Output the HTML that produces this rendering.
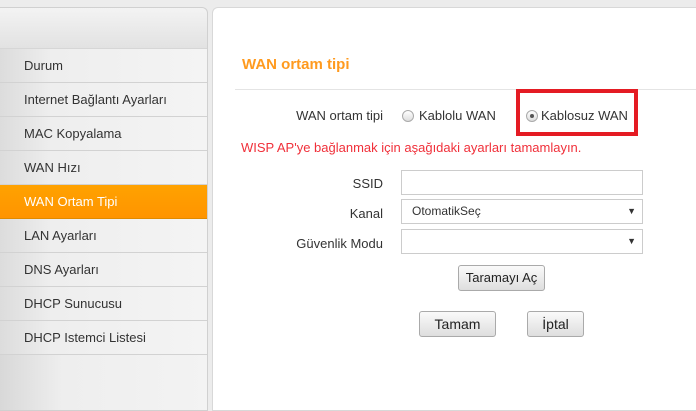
<!DOCTYPE html>
<html><head><meta charset="utf-8"><style>
*{margin:0;padding:0;box-sizing:border-box}
body{width:696px;height:411px;overflow:hidden;background:#ececec;font-family:"Liberation Sans","DejaVu Sans",sans-serif;position:relative}
#side{position:absolute;left:0;top:7px;width:208px;height:404px;background:linear-gradient(90deg,#d8d8d8,#eeeeee 30%,#f3f3f3);border:1px solid #d0d0d0;border-left:none;border-radius:0 6px 0 0}
#side .hd{height:41px;background:linear-gradient(180deg,#f3f3f3,#e2e2e2);border-bottom:1px solid #d6d6d6;border-radius:0 6px 0 0}
.it{height:34px;line-height:33px;padding-left:24px;font-size:13px;color:#333;border-bottom:1px solid #d2d2d2;background:linear-gradient(90deg,#dcdcdc,#eeeeee 25%,#f4f4f4)}
.it.on{background:linear-gradient(180deg,#ffa200,#ff9400);color:#fff;border-bottom-color:#e08a00}
#main{position:absolute;left:212px;top:7px;width:484px;height:404px;background:#fff;border:1px solid #d8d8d8;border-right:none;border-radius:6px 0 0 0}
.abs{position:absolute;font-size:13px;color:#333}
.lbl{position:absolute;right:313px;font-size:13px;color:#333;text-align:right;white-space:nowrap}
h1{position:absolute;left:29px;top:48px;font-size:15px;color:#ff9a1e;font-weight:bold}
.line{position:absolute;left:22px;top:81px;width:462px;height:1px;background:#e4e4e4}
.radio{position:absolute;width:12px;height:12px;border-radius:50%;border:1px solid #aaa;background:linear-gradient(#fff,#ddd)}
.inp{position:absolute;left:188px;width:242px;height:25px;border:1px solid #ccc;background:#fff;font-size:12px;line-height:23px;padding-left:10px;color:#333}
.arr{position:absolute;right:6px;top:0;font-size:9px}
.btn{position:absolute;border:1px solid #aaa;border-radius:3px;background:linear-gradient(#fafafa,#dedede);font-size:14px;text-align:center;color:#222}
</style></head><body>
<div id="side"><div class="hd"></div>
<div class="it">Durum</div>
<div class="it">Internet Bağlantı Ayarları</div>
<div class="it">MAC Kopyalama</div>
<div class="it">WAN Hızı</div>
<div class="it on">WAN Ortam Tipi</div>
<div class="it">LAN Ayarları</div>
<div class="it">DNS Ayarları</div>
<div class="it">DHCP Sunucusu</div>
<div class="it">DHCP Istemci Listesi</div>
</div>
<div id="main">
<div class="line"></div>
<h1>WAN ortam tipi</h1>
<div class="lbl" style="top:100px">WAN ortam tipi</div>
<div class="radio" style="left:189px;top:102px"></div>
<div class="abs" style="left:206px;top:100px">Kablolu WAN</div>
<div style="position:absolute;left:303px;top:81px;width:122px;height:47px;border:4px solid #e41b23"></div>
<div class="radio" style="left:313px;top:102px"></div>
<div style="position:absolute;left:317px;top:106px;width:4px;height:4px;border-radius:50%;background:#555"></div>
<div class="abs" style="left:328px;top:100px">Kablosuz WAN</div>
<div class="abs" style="left:28px;top:132px;color:#f0303a;font-size:13px">WISP AP'ye bağlanmak için aşağıdaki ayarları tamamlayın.</div>
<div class="lbl" style="top:168px">SSID</div>
<div class="inp" style="top:162px"></div>
<div class="lbl" style="top:198px">Kanal</div>
<div class="inp" style="top:191px">OtomatikSeç<span class="arr">▼</span></div>
<div class="lbl" style="top:228px">Güvenlik Modu</div>
<div class="inp" style="top:221px"><span class="arr">▼</span></div>
<div class="btn" style="left:245px;top:257px;width:87px;height:26px;line-height:24px;font-size:13px">Taramayı Aç</div>
<div class="btn" style="left:206px;top:303px;width:77px;height:26px;line-height:24px">Tamam</div>
<div class="btn" style="left:314px;top:303px;width:57px;height:26px;line-height:24px">İptal</div>
</div>
</body></html>
